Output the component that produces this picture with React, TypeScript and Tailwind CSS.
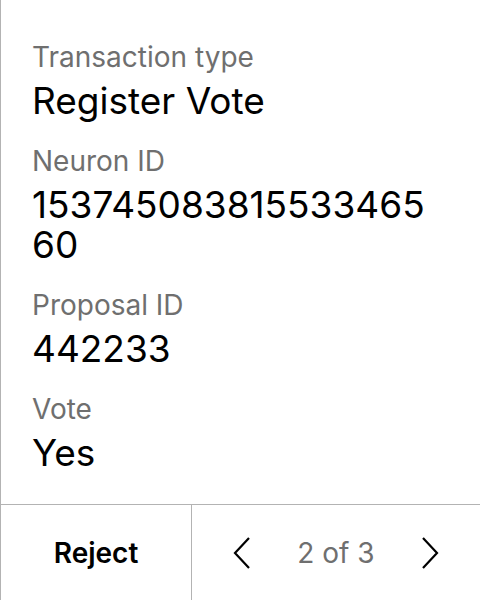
const fields = [
  { label: "Transaction type", value: "Register Vote" },
  { label: "Neuron ID", value: "15374508381553346560" },
  { label: "Proposal ID", value: "442233" },
  { label: "Vote", value: "Yes" },
];

function Chevron({ dir }: { dir: "left" | "right" }) {
  return (
    <svg width="18" height="32" viewBox="0 0 18 32" fill="none" stroke="#000" strokeWidth={2.2}>
      {dir === "left" ? <path d="M16 1L2 16l14 15" /> : <path d="M2 1l14 15L2 31" />}
    </svg>
  );
}

export default function App() {
  return (
    <div
      className="w-[480px] h-[600px] bg-white flex flex-col border-l border-[#b3b3b3] text-black"
      style={{ fontFamily: "Inter, 'Noto Sans', sans-serif" }}
    >
      {/* content */}
      <div className="flex-1 flex flex-col gap-[24px] pt-[41px] pl-[31px] pr-[32px]">
        {fields.map((f) => (
          <div key={f.label} className="flex flex-col">
            <div className="text-[28px] leading-[32px] text-[#6f6f6f]">{f.label}</div>
            <div className="mt-[8px] max-w-[404px] text-[37px] leading-[40px] break-all [overflow-wrap:anywhere]">
              {f.value}
            </div>
          </div>
        ))}
      </div>

      {/* footer */}
      <div className="h-[96px] flex border-t border-[#b3b3b3]">
        <button className="w-[191px] flex items-center justify-center text-[28px] font-semibold border-r border-[#b3b3b3]">
          Reject
        </button>
        <div className="flex-1 flex items-center justify-between pl-[41px] pr-[41px]">
          <Chevron dir="left" />
          <span className="text-[28px] text-[#6f6f6f]">2 of 3</span>
          <Chevron dir="right" />
        </div>
      </div>
    </div>
  );
}
